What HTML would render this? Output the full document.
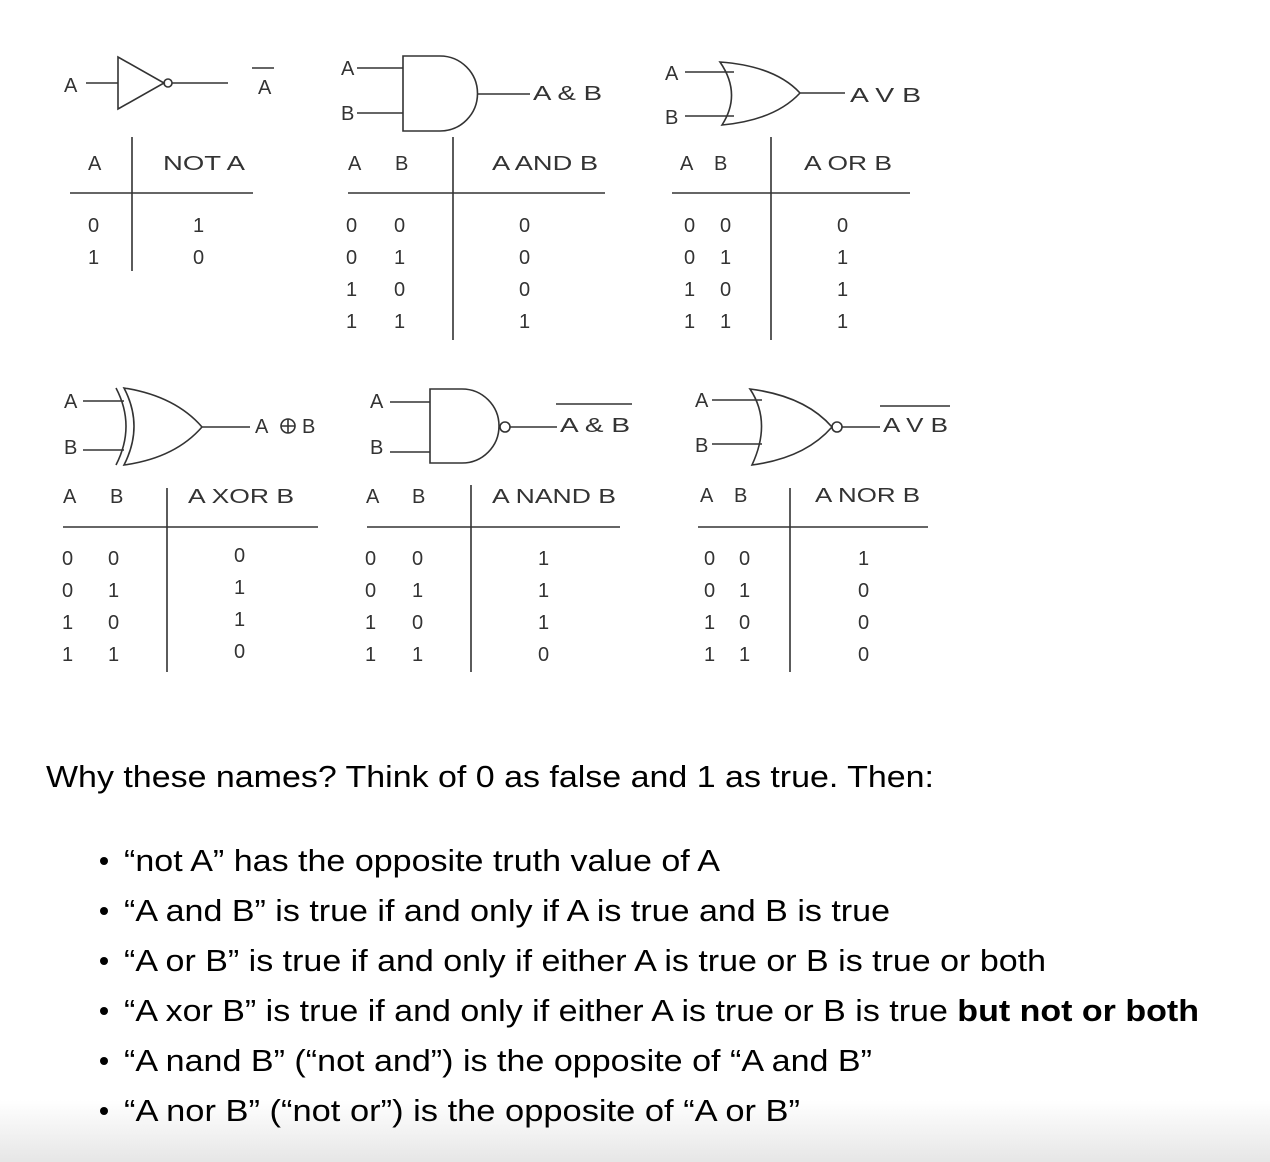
<!DOCTYPE html>
<html><head><meta charset="utf-8"><style>
html,body{margin:0;padding:0;background:#fff;width:1270px;height:1162px;overflow:hidden}
svg{display:block}
.d{font-family:"Liberation Sans",sans-serif;font-size:20px;fill:#333}
.p{font-family:"Liberation Sans",sans-serif;font-size:31px;fill:#000}
</style></head><body>
<svg width="1270" height="1162" viewBox="0 0 1270 1162" xmlns="http://www.w3.org/2000/svg">
<defs><linearGradient id="g" x1="0" y1="0" x2="0" y2="1"><stop offset="0" stop-color="#fff"/><stop offset="1" stop-color="#e6e6e6"/></linearGradient></defs>
<rect x="0" y="1100" width="1270" height="62" fill="url(#g)"/>
<g fill="none" stroke="#333" stroke-width="1.6">
<path d="M86 83H118M118 57V109L164 83Z"/><circle cx="168" cy="83" r="4"/><path d="M172 83H228M252 68H274"/>
<path d="M132 137V271M70 193H253"/>
<path d="M357 68H403M357 113H403M403 56V131H440A37 37 0 0 0 440 56Z M477 94H530"/>
<path d="M453 137V340M348 193H605"/>
<path d="M685 72H734M685 116H734M720 62Q742 94 722 125Q775 120 800 93Q775 66 720 62Z M800 93H845"/>
<path d="M771 137V340M672 193H910"/>
<path d="M83 401H124M83 450H124M116 388Q136 426 116 465M124 388Q144 426 124 465Q175 458 202 427Q175 396 124 388Z M202 427H250"/>
<path d="M167 488V672M63 527H318"/>
<path d="M390 402H430M390 452H430M430 389V463H462A37 37 0 0 0 462 389Z"/><circle cx="505" cy="427" r="5"/><path d="M510 427H557M556 404H632"/>
<path d="M471 485V672M367 527H620"/>
<path d="M712 400H762M712 444H762M750 389Q772 422 752 465Q805 458 832 427Q805 396 750 389Z"/><circle cx="837" cy="427" r="5"/><path d="M842 427H880M880 406H950"/>
<path d="M790 488V672M698 527H928"/>
</g>
<g class="d">
<text x="64" y="92">A</text><text x="258" y="94">A</text>
<text x="88" y="170">A</text><text x="163" y="170" textLength="82" lengthAdjust="spacingAndGlyphs">NOT A</text>
<text x="88" y="232">0</text><text x="88" y="264">1</text><text x="193" y="232">1</text><text x="193" y="264">0</text>
<text x="341" y="75">A</text><text x="341" y="120">B</text><text x="533" y="100" textLength="69" lengthAdjust="spacingAndGlyphs">A &amp; B</text>
<text x="348" y="170">A</text><text x="395" y="170">B</text><text x="492" y="170" textLength="106" lengthAdjust="spacingAndGlyphs">A AND B</text>
<text x="346" y="232">0</text><text x="394" y="232">0</text><text x="519" y="232">0</text>
<text x="346" y="264">0</text><text x="394" y="264">1</text><text x="519" y="264">0</text>
<text x="346" y="296">1</text><text x="394" y="296">0</text><text x="519" y="296">0</text>
<text x="346" y="328">1</text><text x="394" y="328">1</text><text x="519" y="328">1</text>
<text x="665" y="80">A</text><text x="665" y="124">B</text><text x="850" y="102" textLength="71" lengthAdjust="spacingAndGlyphs">A V B</text>
<text x="680" y="170">A</text><text x="714" y="170">B</text><text x="804" y="170" textLength="88" lengthAdjust="spacingAndGlyphs">A OR B</text>
<text x="684" y="232">0</text><text x="720" y="232">0</text><text x="837" y="232">0</text>
<text x="684" y="264">0</text><text x="720" y="264">1</text><text x="837" y="264">1</text>
<text x="684" y="296">1</text><text x="720" y="296">0</text><text x="837" y="296">1</text>
<text x="684" y="328">1</text><text x="720" y="328">1</text><text x="837" y="328">1</text>
<text x="64" y="408">A</text><text x="64" y="454">B</text><text x="255" y="433">A</text>
<circle cx="288" cy="426" r="7" fill="none" stroke="#333" stroke-width="1.6"/><path d="M281 426H295M288 419V433" stroke="#333" stroke-width="1.6"/><text x="302" y="433">B</text>
<text x="63" y="503">A</text><text x="110" y="503">B</text><text x="188" y="503" textLength="106" lengthAdjust="spacingAndGlyphs">A XOR B</text>
<text x="62" y="565">0</text><text x="108" y="565">0</text><text x="234" y="562">0</text>
<text x="62" y="597">0</text><text x="108" y="597">1</text><text x="234" y="594">1</text>
<text x="62" y="629">1</text><text x="108" y="629">0</text><text x="234" y="626">1</text>
<text x="62" y="661">1</text><text x="108" y="661">1</text><text x="234" y="658">0</text>
<text x="370" y="408">A</text><text x="370" y="454">B</text><text x="560" y="432" textLength="70" lengthAdjust="spacingAndGlyphs">A &amp; B</text>
<text x="366" y="503">A</text><text x="412" y="503">B</text><text x="492" y="503" textLength="124" lengthAdjust="spacingAndGlyphs">A NAND B</text>
<text x="365" y="565">0</text><text x="412" y="565">0</text><text x="538" y="565">1</text>
<text x="365" y="597">0</text><text x="412" y="597">1</text><text x="538" y="597">1</text>
<text x="365" y="629">1</text><text x="412" y="629">0</text><text x="538" y="629">1</text>
<text x="365" y="661">1</text><text x="412" y="661">1</text><text x="538" y="661">0</text>
<text x="695" y="407">A</text><text x="695" y="452">B</text><text x="883" y="432" textLength="65" lengthAdjust="spacingAndGlyphs">A V B</text>
<text x="700" y="502">A</text><text x="734" y="502">B</text><text x="815" y="502" textLength="105" lengthAdjust="spacingAndGlyphs">A NOR B</text>
<text x="704" y="565">0</text><text x="739" y="565">0</text><text x="858" y="565">1</text>
<text x="704" y="597">0</text><text x="739" y="597">1</text><text x="858" y="597">0</text>
<text x="704" y="629">1</text><text x="739" y="629">0</text><text x="858" y="629">0</text>
<text x="704" y="661">1</text><text x="739" y="661">1</text><text x="858" y="661">0</text>
</g>
<g class="p">
<text x="46" y="787" textLength="888" lengthAdjust="spacingAndGlyphs">Why these names? Think of 0 as false and 1 as true. Then:</text>
<g fill="#000"><circle cx="104" cy="861" r="4"/><circle cx="104" cy="911" r="4"/><circle cx="104" cy="961" r="4"/><circle cx="104" cy="1011" r="4"/><circle cx="104" cy="1061" r="4"/><circle cx="104" cy="1111" r="4"/></g>
<text x="124" y="871" textLength="596" lengthAdjust="spacingAndGlyphs">“not A” has the opposite truth value of A</text>
<text x="124" y="921" textLength="766" lengthAdjust="spacingAndGlyphs">“A and B” is true if and only if A is true and B is true</text>
<text x="124" y="971" textLength="922" lengthAdjust="spacingAndGlyphs">“A or B” is true if and only if either A is true or B is true or both</text>
<text x="124" y="1021" textLength="1075" lengthAdjust="spacingAndGlyphs">“A xor B” is true if and only if either A is true or B is true <tspan font-weight="bold">but not or both</tspan></text>
<text x="124" y="1071" textLength="748" lengthAdjust="spacingAndGlyphs">“A nand B” (“not and”) is the opposite of “A and B”</text>
<text x="124" y="1121" textLength="676" lengthAdjust="spacingAndGlyphs">“A nor B” (“not or”) is the opposite of “A or B”</text>
</g>
</svg>
</body></html>
